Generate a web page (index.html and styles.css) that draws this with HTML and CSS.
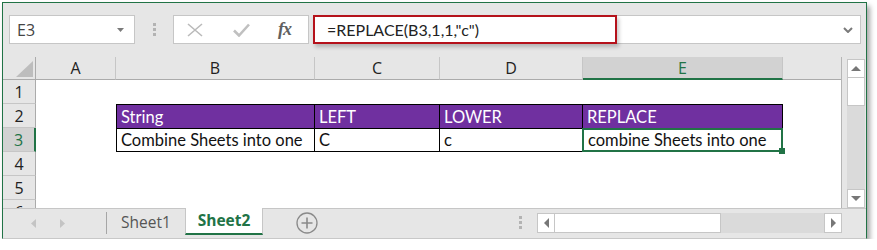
FILE: index.html
```html
<!DOCTYPE html>
<html>
<head>
<meta charset="utf-8">
<link rel="stylesheet" href="styles.css">
</head>
<body>
<div class="window">
  <div class="toolbar">
    <div class="namebox">
      <span class="nb-text">E3</span>
      <svg class="nb-arrow" width="7" height="4" viewBox="0 0 7 4"><path d="M0 0H7L3.5 4Z" fill="#7a7a7a"/></svg>
    </div>
    <div class="grip"><i></i><i></i><i></i></div>
    <div class="fxbox">
      <svg class="ic-x" width="16" height="14" viewBox="0 0 16 14"><path d="M1 1L15 13M15 1L1 13" stroke="#bababa" stroke-width="1.6" fill="none"/></svg>
      <svg class="ic-check" width="17" height="14" viewBox="0 0 17 14"><path d="M1 7.5L6 12.5L16 1.5" stroke="#c0c0c0" stroke-width="2.6" fill="none"/></svg>
      <span class="ic-fx">fx</span>
    </div>
    <div class="formula">
      <div class="formula-hl">=REPLACE(B3,1,1,"c")</div>
      <svg class="fb-chev" width="10" height="6" viewBox="0 0 10 6"><path d="M1 1L5 5L9 1" stroke="#7a7a7a" stroke-width="2" fill="none"/></svg>
    </div>
  </div>

  <div class="sheet-area">
    <div class="sheet">
      <div class="corner"><svg width="17" height="16" viewBox="0 0 17 16"><path d="M17 0V16H0Z" fill="#bdbdbd"/></svg></div>
      <div class="ch">A</div>
      <div class="ch">B</div>
      <div class="ch">C</div>
      <div class="ch">D</div>
      <div class="ch ch-sel">E</div>
      <div class="ch-rest"></div>

      <div class="rh">1</div>
      <div class="c"></div><div class="c"></div><div class="c"></div><div class="c"></div><div class="c"></div><div class="c"></div>

      <div class="rh">2</div>
      <div class="c"></div>
      <div class="t th tl">String</div>
      <div class="t th">LEFT</div>
      <div class="t th">LOWER</div>
      <div class="t th">REPLACE</div>
      <div class="c"></div>

      <div class="rh rh-sel">3</div>
      <div class="c"></div>
      <div class="t td tl">Combine Sheets into one</div>
      <div class="t td">C</div>
      <div class="t td">c</div>
      <div class="t td sel">combine Sheets into one<span class="handle"></span></div>
      <div class="c"></div>

      <div class="rh">4</div>
      <div class="c"></div><div class="c"></div><div class="c"></div><div class="c"></div><div class="c"></div><div class="c"></div>

      <div class="rh">5</div>
      <div class="c"></div><div class="c"></div><div class="c"></div><div class="c"></div><div class="c"></div><div class="c"></div>

      <div class="rh">6</div>
      <div class="c"></div><div class="c"></div><div class="c"></div><div class="c"></div><div class="c"></div><div class="c"></div>
    </div>
    <div class="vscroll">
      <div class="sbtn"><svg width="10" height="5" viewBox="0 0 10 5"><path d="M0 5H10L5 0Z" fill="#777"/></svg></div>
      <div class="vthumb"></div>
      <div class="vtrack"></div>
      <div class="sbtn"><svg width="10" height="5" viewBox="0 0 10 5"><path d="M0 0H10L5 5Z" fill="#777"/></svg></div>
    </div>
  </div>

  <div class="tabbar">
    <div class="nav">
      <svg class="nav-l" width="5" height="9" viewBox="0 0 5 9"><path d="M5 0V9L0 4.5Z" fill="#c4c4c4"/></svg>
      <svg class="nav-r" width="5" height="9" viewBox="0 0 5 9"><path d="M0 0V9L5 4.5Z" fill="#c4c4c4"/></svg>
    </div>
    <div class="tab-sep"></div>
    <div class="tab">Sheet1</div>
    <div class="tab tab-active">Sheet2</div>
    <svg class="addsheet" width="22" height="22" viewBox="0 0 22 22"><circle cx="11" cy="11" r="10" stroke="#8a8a8a" stroke-width="1.3" fill="none"/><path d="M11 5.5V16.5M5.5 11H16.5" stroke="#8a8a8a" stroke-width="1.6"/></svg>
    <div class="hgrip"><i></i><i></i><i></i></div>
    <div class="hscroll">
      <div class="sbtn"><svg width="5" height="10" viewBox="0 0 5 10"><path d="M5 0V10L0 5Z" fill="#777"/></svg></div>
      <div class="hthumb"></div>
      <div class="htrack"></div>
      <div class="sbtn"><svg width="5" height="10" viewBox="0 0 5 10"><path d="M0 0V10L5 5Z" fill="#777"/></svg></div>
    </div>
  </div>
</div>
</body>
</html>
```

FILE: styles.css
```css
* { box-sizing: border-box; }
body {
  margin: 0;
  background: #ffffff;
  font-family: "Open Sans", "Liberation Sans", sans-serif;
}
.window {
  margin: 2px 0 0 2px;
  width: 865px;
  height: 237px;
  border: 1px solid #217346;
  border-bottom-color: #c8c8c8;
  background: #e6e6e6;
  box-shadow: 3px 4px 5px rgba(0,0,0,0.35);
  display: flex;
  flex-direction: column;
}
.toolbar {
  display: flex;
  align-items: stretch;
  height: 29px;
  margin: 12px 0 13px 6px;
}
.namebox {
  width: 126px;
  background: #fff;
  border: 1px solid #c6c6c6;
  display: flex;
  align-items: center;
  padding: 0 10px 0 7px;
}
.nb-text {
  font-size: 16px;
  color: #444;
  flex: 1;
}
.grip {
  width: 3px;
  margin: 0 17px 0 18px;
  display: flex;
  flex-direction: column;
  justify-content: center;
  gap: 2px;
}
.grip i, .hgrip i {
  display: block;
  width: 3px;
  height: 3px;
  background: #b3b3b3;
}
.fxbox {
  width: 136px;
  background: #fff;
  border: 1px solid #c6c6c6;
  display: flex;
  align-items: center;
  padding-left: 13px;
}
.ic-check { margin-left: 30px; }
.ic-fx {
  margin-left: 28px;
  font-family: "Liberation Serif", serif;
  font-style: italic;
  font-weight: bold;
  font-size: 18px;
  color: #606060;
  letter-spacing: -1px;
}
.formula {
  margin-left: 4px;
  width: 548px;
  background: #fff;
  border: 1px solid #c6c6c6;
  display: flex;
  align-items: center;
}
.formula-hl {
  align-self: stretch;
  width: 304px;
  margin: -1px 0 -1px -1px;
  border: 2px solid #b5121b;
  box-shadow: 2px 3px 4px rgba(0,0,0,0.22);
  display: flex;
  align-items: center;
  padding-left: 12px;
  font-family: "Lato", "Liberation Sans", sans-serif;
  font-size: 16px;
  color: #222;
}
.fb-chev { margin-left: auto; margin-right: 7px; }

.sheet-area {
  display: flex;
  height: 151px;
}
.sheet {
  width: 839px;
  display: grid;
  grid-template-columns: 33px 80px 199px 125px 143px 200px 59px;
  grid-template-rows: 23px repeat(5, 24px) 24px;
  overflow: hidden;
  background: #fff;
  border-right: 1px solid #b5b5b5;
}
.corner {
  background: #e6e6e6;
  border-right: 1px solid #ababab;
  border-bottom: 1px solid #ababab;
  display: flex;
  align-items: flex-end;
  justify-content: flex-end;
  padding: 0 2px 2px 0;
}
.ch {
  background: #e6e6e6;
  border-right: 1px solid #c6c6c6;
  border-bottom: 1px solid #ababab;
  display: flex;
  align-items: center;
  justify-content: center;
  font-size: 16px;
  color: #222;
}
.ch-sel {
  background: #d2d2d2;
  border-bottom: 2px solid #217346;
  color: #217346;
  padding-top: 1px;
}
.ch-rest {
  background: #e6e6e6;
  border-bottom: 1px solid #ababab;
}
.rh {
  background: #e6e6e6;
  border-right: 1px solid #ababab;
  border-bottom: 1px solid #c6c6c6;
  display: flex;
  align-items: center;
  justify-content: center;
  font-size: 16px;
  color: #222;
}
.rh-sel {
  background: #d2d2d2;
  border-right: 2px solid #217346;
  color: #217346;
}
.c { background: #fff; }
.t {
  display: flex;
  align-items: center;
  padding-left: 4px;
  font-family: "Lato", "Liberation Sans", sans-serif;
  font-size: 16.5px;
  border-right: 1px solid #000;
  position: relative;
  white-space: nowrap;
}
.th {
  background: #7030a0;
  color: #fff;
  border-top: 1px solid #000;
}
.td {
  background: #fff;
  color: #111;
  border-top: 1px solid #000;
  border-bottom: 1px solid #000;
}
.tl { border-left: 1px solid #000; }
.sel {
  border: 2px solid #217346;
  margin-left: -1px;
  padding-left: 4px;
}
.handle {
  position: absolute;
  right: -5px;
  bottom: -5px;
  width: 7px;
  height: 7px;
  background: #217346;
  border: 1px solid #fff;
  border-top-width: 0;
  border-left-width: 0;
}
.vscroll {
  width: 18px;
  margin: 2px 0 0 5px;
  display: flex;
  flex-direction: column;
}
.sbtn {
  background: #fff;
  border: 1px solid #c6c6c6;
  display: flex;
  align-items: center;
  justify-content: center;
}
.vscroll .sbtn { height: 19px; }
.vthumb {
  height: 28px;
  background: #fff;
  border: 1px solid #c6c6c6;
  border-top: none;
}
.vtrack { flex: 1; background: #dadada; }

.tabbar {
  flex: 1;
  border-top: 1px solid #c6c6c6;
  display: flex;
  align-items: stretch;
}
.nav {
  width: 103px;
  display: flex;
  align-items: center;
  padding-left: 28px;
}
.nav-r { margin-left: 24px; }
.tab-sep {
  width: 1px;
  background: #a6a6a6;
  margin: 3px 0 4px;
}
.tab {
  width: 78px;
  display: flex;
  align-items: center;
  justify-content: center;
  font-size: 15.5px;
  color: #555;
  padding-bottom: 3px;
}
.tab-active {
  background: #fff;
  margin-top: -1px;
  border-left: 1px solid #c6c6c6;
  border-right: 1px solid #c6c6c6;
  border-bottom: 2px solid #217346;
  margin-bottom: 3px;
  color: #217346;
  font-weight: bold;
  padding-bottom: 1px;
}
.addsheet {
  align-self: center;
  margin: 0 0 2px 33px;
}
.hgrip {
  width: 3px;
  margin-left: 201px;
  display: flex;
  flex-direction: column;
  justify-content: center;
  gap: 2px;
  padding-bottom: 3px;
}
.hscroll {
  margin: 4px 0 5px 15px;
  display: flex;
}
.hscroll .sbtn { width: 18px; }
.hthumb {
  width: 166px;
  background: #fff;
  border: 1px solid #c6c6c6;
  border-left: none;
}
.htrack { width: 103px; background: #dadada; }
```
